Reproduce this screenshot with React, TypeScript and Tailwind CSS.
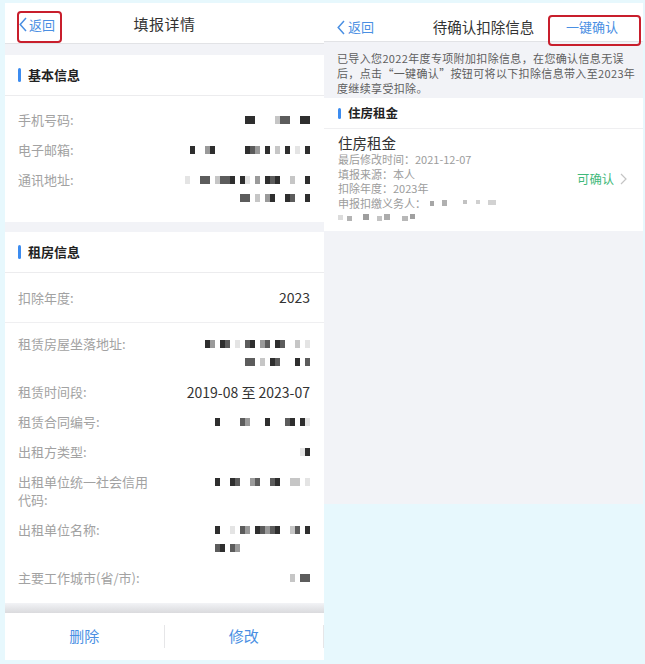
const shades: Record<string, string> = {
  a: "#e4e4e4",
  b: "#c6c6c6",
  c: "#9a9a9a",
  d: "#5c5c5c",
  e: "#2e2e2e",
};

// pixelated (censored) value, one string per text line
function Mosaic({ lines }: { lines: string[] }) {
  return (
    <div className="flex flex-col items-end">
      {lines.map((p, i) => (
        <div key={i} className="h-[18px] flex items-center">
          <svg width={p.length * 5} height={8}>
            {p.split("").map((ch, j) =>
              ch === " " ? null : (
                <rect key={j} x={j * 5} y={0} width={5} height={8} fill={shades[ch]} />
              )
            )}
          </svg>
        </div>
      ))}
    </div>
  );
}

function Chevron({ className }: { className?: string }) {
  return (
    <svg width="8" height="15" viewBox="0 0 8 15" className={className}>
      <polyline points="7,1 1.2,7.5 7,14" fill="none" stroke="currentColor" strokeWidth="1.5" />
    </svg>
  );
}

function SectionHeader({ title }: { title: string }) {
  return (
    <div className="h-[41px] flex items-center pl-[13px] bg-white border-b border-[#ececee]">
      <span className="w-[3px] h-[14px] rounded-full bg-[#3c8cf0] mr-[7px]" />
      <span className="text-[13px] font-bold text-[#222]">{title}</span>
    </div>
  );
}

function Row({ label, value }: { label: React.ReactNode; value: React.ReactNode }) {
  return (
    <div className="flex justify-between items-start">
      <div className="w-[132px] text-[13px] leading-[18px] text-[#a2a2a2]">{label}</div>
      <div className="flex-1 flex justify-end text-[14px] leading-[18px] text-[#333]">{value}</div>
    </div>
  );
}

function LeftPhone() {
  return (
    <div className="w-[319px] h-[657px] bg-[#f2f3f7] flex flex-col">
      <div className="relative h-[41px] pt-[3px] bg-white border-b border-[#e2e3e6] grid grid-cols-[1fr_auto_1fr] items-center">
        <div className="flex items-center pl-[14px] text-[#4a8fe3]">
          <Chevron className="mr-[2px]" />
          <span className="text-[13px]">返回</span>
        </div>
        <span className="text-[15px] text-[#333] tracking-[0.5px]">填报详情</span>
        <div />
        <div className="absolute left-[12px] top-[8px] w-[45px] h-[32px] border-2 border-[#c81e2c] rounded-[4px]" />
      </div>
      <div className="h-[11px]" />
      <div className="bg-white">
        <SectionHeader title="基本信息" />
        <div className="flex flex-col gap-3 pt-[15px] pb-[15px] pl-[13px] pr-[14px]">
          <Row label="手机号码:" value={<Mosaic lines={["ee    bdd  ee"]} />} />
          <Row label="电子邮箱:" value={<Mosaic lines={["e  ce      edc e b e a e"]} />} />
          <Row
            label="通讯地址:"
            value={<Mosaic lines={["a  dd bdde ea c ede  b  e", "dd b ce  ed  e"]} />}
          />
        </div>
      </div>
      <div className="h-[10px]" />
      <div className="bg-white">
        <SectionHeader title="租房信息" />
        <div className="h-[50px] flex items-center justify-between pl-[13px] pr-[14px] border-b border-[#efeff1]">
          <span className="text-[13px] text-[#a2a2a2]">扣除年度:</span>
          <span className="text-[14px] text-[#333]">2023</span>
        </div>
        <div className="flex flex-col gap-3 pt-[12px] pb-[16px] pl-[13px] pr-[14px]">
          <Row
            label="租赁房屋坐落地址:"
            value={<Mosaic lines={["ec ed a de cd ed  b a", "  dd b ed   e d"]} />}
          />
          <Row label="租赁时间段:" value={<span className="whitespace-nowrap">2019-08 至 2023-07</span>} />
          <Row label="租赁合同编号:" value={<Mosaic lines={["e    dc   e   de ea"]} />} />
          <Row label="出租方类型:" value={<Mosaic lines={["ae"]} />} />
          <Row
            label={
              <>
                出租单位统一社会信用
                <br />
                代码:
              </>
            }
            value={<Mosaic lines={["e  ed  cd  de  bb a"]} />}
          />
          <Row
            label="出租单位名称:"
            value={<Mosaic lines={["e  a dc edcde  bd e", "de dc              "]} />}
          />
          <Row label="主要工作城市(省/市):" value={<Mosaic lines={["b dd"]} />} />
        </div>
      </div>
      <div className="h-[10px] bg-linear-to-b from-[#f2f3f6] to-[#dadadd]" />
      <div className="h-[47px] bg-white flex items-center">
        <div className="flex-1 flex items-center">
          <span className="flex-1 text-center text-[15px] text-[#4a8fe3]">删除</span>
          <span className="w-px h-[23px] bg-[#e6e6e8]" />
        </div>
        <div className="flex-1 flex items-center">
          <span className="flex-1 text-center text-[15px] text-[#4a8fe3]">修改</span>
          <span className="w-px h-[23px] bg-[#e6e6e8]" />
        </div>
      </div>
    </div>
  );
}

function RightPhone() {
  return (
    <div className="w-[319px] h-[501px] bg-[#f2f3f7] flex flex-col">
      <div className="relative h-[39px] pt-[10px] bg-white border-b border-[#e2e3e6] grid grid-cols-[1fr_auto_1fr] items-center">
        <div className="flex items-center pl-[13px] text-[#4a8fe3]">
          <Chevron className="mr-[3px]" />
          <span className="text-[13px]">返回</span>
        </div>
        <span className="text-[14.5px] text-[#333]">待确认扣除信息</span>
        <div className="flex justify-end pr-[25px]">
          <span className="text-[13px] text-[#4a8fe3]">一键确认</span>
        </div>
        <div className="absolute left-[224px] top-[12px] w-[93px] h-[31px] border-2 border-[#c81e2c] rounded-[4px]" />
      </div>
      <div className="pt-[9px] pb-[2px] pl-[13px] text-[11px] leading-[15px] tracking-[0.35px] text-[#5e5e5e] whitespace-nowrap">
        已导入您2022年度专项附加扣除信息，在您确认信息无误
        <br />
        后，点击“一键确认”按钮可将以下扣除信息带入至2023年
        <br />
        度继续享受扣除。
      </div>
      <div className="h-[31px] bg-white border-b border-[#efeff1] flex items-center pl-[14px]">
        <span className="w-[3px] h-[11px] rounded-full bg-[#3c8cf0] mr-[7px]" />
        <span className="text-[12.5px] font-bold text-[#222]">住房租金</span>
      </div>
      <div className="bg-white flex items-center pt-[5px] pb-[6px] pl-[14px] pr-[16px]">
        <div className="flex-1">
          <div className="text-[14.5px] leading-[18px] text-[#333]">住房租金</div>
          <div className="text-[11px] leading-[14.5px] text-[#9c9c9c]">
            <div>最后修改时间：2021-12-07</div>
            <div>填报来源：本人</div>
            <div>扣除年度：2023年</div>
            <div className="flex items-center">
              <span>申报扣缴义务人：</span>
              <svg width="68" height="6" className="ml-[4px]">
                <rect x="0" y="1" width="4" height="5" fill="#a6a6a6" />
                <rect x="12" y="0" width="5" height="6" fill="#b0b0b0" />
                <rect x="33" y="0" width="4" height="4" fill="#c2c2c2" />
                <rect x="46" y="0" width="4" height="4" fill="#d0d0d0" />
                <rect x="58" y="0" width="8" height="5" fill="#d2d2d2" />
              </svg>
            </div>
            <div className="h-[14.5px] flex items-center">
              <svg width="86" height="7">
                <rect x="0" y="1" width="5" height="5" fill="#dcdcdc" />
                <rect x="9" y="2" width="5" height="5" fill="#b4b4b4" />
                <rect x="25" y="0" width="6" height="6" fill="#9e9e9e" />
                <rect x="39" y="2" width="5" height="5" fill="#c4c4c4" />
                <rect x="46" y="0" width="6" height="6" fill="#acacac" />
                <rect x="64" y="2" width="6" height="5" fill="#b8b8b8" />
                <rect x="72" y="0" width="5" height="5" fill="#a0a0a0" />
              </svg>
            </div>
          </div>
        </div>
        <div className="flex items-center text-[#3fb97a]">
          <span className="text-[12.3px]">可确认</span>
          <svg width="7" height="12" viewBox="0 0 7 12" className="ml-[6px] text-[#c4c4c4]">
            <polyline points="1,1 6,6 1,11" fill="none" stroke="currentColor" strokeWidth="1.2" />
          </svg>
        </div>
      </div>
      <div className="flex-1" />
    </div>
  );
}

export default function App() {
  return (
    <div className="w-[645px] h-[664px] bg-[#e7f8fd] pt-[3px] pl-[5px] flex items-start font-['Noto_Sans_CJK_SC','Noto_Sans',sans-serif]">
      <LeftPhone />
      <RightPhone />
    </div>
  );
}
